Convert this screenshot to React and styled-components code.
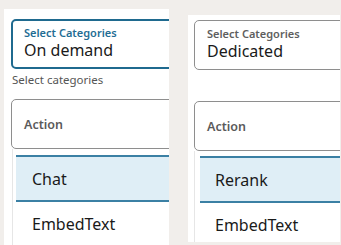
import React from 'react'
import styled, { createGlobalStyle } from 'styled-components'

const GlobalStyle = createGlobalStyle`
  html, body {
    margin: 0;
    padding: 0;
    background: #f1eeeb;
    font-family: "Noto Sans", "Open Sans", sans-serif;
  }
`

const Page = styled.div`
  display: flex;
  align-items: flex-start;
  width: 341px;
  height: 245px;
  overflow: hidden;
`

const Panel = styled.div`
  background: #ffffff;
  overflow: hidden;
  display: flex;
  flex-direction: column;
  margin-left: ${(p) => p.$left}px;
  margin-top: ${(p) => p.$top}px;
  width: ${(p) => p.$width}px;
  height: ${(p) => p.$height}px;
  padding-left: ${(p) => p.$inset}px;
  box-sizing: border-box;
`

const Field = styled.div`
  box-sizing: border-box;
  width: 200px;
  height: 50px;
  flex-shrink: 0;
  border: ${(p) => (p.$active ? '2px solid #1f6a8f' : '1px solid #8e8e8e')};
  border-radius: 5px;
  padding-left: ${(p) => (p.$active ? 11 : 12)}px;
  padding-top: ${(p) => (p.$active ? 5 : 6)}px;
  display: flex;
  flex-direction: column;
`

const FieldLabel = styled.div`
  font-size: 11px;
  line-height: 13px;
  font-weight: 600;
  color: ${(p) => (p.$active ? '#1f6d94' : '#5e5e5e')};
`

const FieldValue = styled.div`
  font-size: 16px;
  line-height: 18px;
  margin-top: 2px;
  color: #1a1a1a;
`

const ActionField = styled(Field)`
  padding-top: 0;
  justify-content: center;
`

const ActionLabel = styled.div`
  font-size: 12.5px;
  font-weight: 600;
  color: #5a5a5a;
`

const Helper = styled.div`
  font-size: 11.5px;
  line-height: 16px;
  color: #555555;
  margin: 3px 0 0 1px;
  height: 16px;
`

const List = styled.div`
  box-sizing: border-box;
  width: 200px;
  flex: 1;
  margin-left: ${(p) => p.$shift}px;
  border-left: 1px solid #e6e6e6;
  padding: ${(p) => p.$padTop}px 0 0 ${(p) => p.$padLeft}px;
`

const Option = styled.div`
  box-sizing: border-box;
  height: ${(p) => (p.$selected ? 47 : 44)}px;
  display: flex;
  align-items: center;
  padding-left: ${(p) => p.$pad}px;
  font-size: 16px;
  color: #1a1a1a;
  background: ${(p) => (p.$selected ? '#dfeef6' : 'transparent')};
  border-top: ${(p) => (p.$selected ? '2px solid #3b80a4' : 'none')};
  border-bottom: ${(p) => (p.$selected ? '2px solid #3b80a4' : 'none')};
`

const Spacer = styled.div`
  height: ${(p) => p.$h}px;
  flex-shrink: 0;
`

export default function App() {
  return (
    <>
      <GlobalStyle />
      <Page>
        <Panel $left={4} $top={9} $width={165} $height={236} $inset={7}>
          <Spacer $h={10} />
          <Field $active>
            <FieldLabel $active>Select Categories</FieldLabel>
            <FieldValue>On demand</FieldValue>
          </Field>
          <Helper>Select categories</Helper>
          <Spacer $h={11} />
          <ActionField>
            <ActionLabel>Action</ActionLabel>
          </ActionField>
          <List $shift={1} $padTop={6} $padLeft={3}>
            <Option $selected $pad={16}>Chat</Option>
            <Option $pad={16}>EmbedText</Option>
          </List>
        </Panel>
        <Panel $left={19} $top={15} $width={152} $height={227} $inset={6}>
          <Spacer $h={5} />
          <Field>
            <FieldLabel>Select Categories</FieldLabel>
            <FieldValue>Dedicated</FieldValue>
          </Field>
          <Spacer $h={31} />
          <ActionField>
            <ActionLabel>Action</ActionLabel>
          </ActionField>
          <List $shift={0} $padTop={5} $padLeft={5}>
            <Option $selected $pad={15}>Rerank</Option>
            <Option $pad={15}>EmbedText</Option>
          </List>
        </Panel>
      </Page>
    </>
  )
}
